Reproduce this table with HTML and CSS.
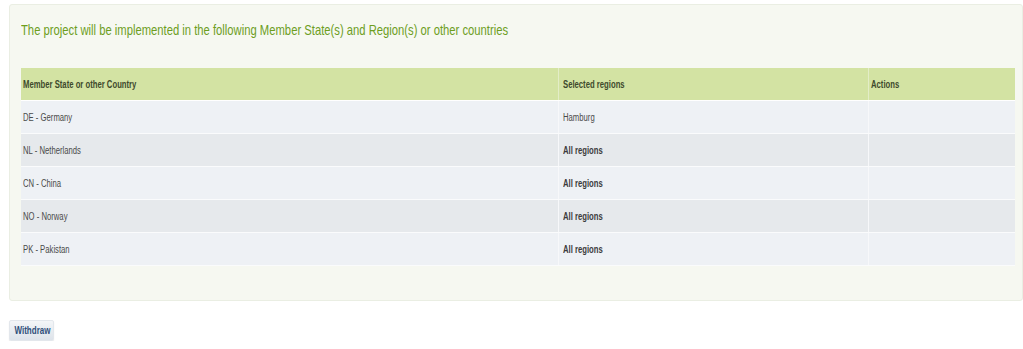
FILE: index.html
```html
<!DOCTYPE html>
<html>
<head>
<meta charset="utf-8">
<link rel="stylesheet" href="styles.css">
</head>
<body>
<div class="panel">
  <h2 class="title"><span class="nx">The project will be implemented in the following Member State(s) and Region(s) or other countries</span></h2>
  <table class="grid">
    <thead>
      <tr><th class="c1"><span class="nx">Member State or other Country</span></th><th class="c2"><span class="nx">Selected regions</span></th><th class="c3"><span class="nx">Actions</span></th></tr>
    </thead>
    <tbody>
      <tr class="odd"><td><span class="nx">DE - Germany</span></td><td><span class="nx">Hamburg</span></td><td></td></tr>
      <tr class="even"><td><span class="nx">NL - Netherlands</span></td><td class="b"><span class="nx">All regions</span></td><td></td></tr>
      <tr class="odd"><td><span class="nx">CN - China</span></td><td class="b"><span class="nx">All regions</span></td><td></td></tr>
      <tr class="even"><td><span class="nx">NO - Norway</span></td><td class="b"><span class="nx">All regions</span></td><td></td></tr>
      <tr class="odd"><td><span class="nx">PK - Pakistan</span></td><td class="b"><span class="nx">All regions</span></td><td></td></tr>
    </tbody>
  </table>
</div>
<div class="actions"><button class="btn"><span class="nxc">Withdraw</span></button></div>
</body>
</html>
```
FILE: styles.css
```css
html, body { margin: 0; padding: 0; background: #fff; }
body {
  font-family: "Liberation Sans", Arial, sans-serif;
  padding: 4px 2px 0 9px;
}
.nx {
  display: inline-block;
  white-space: nowrap;
  transform: scaleX(0.77);
  transform-origin: left center;
}
.nxc {
  display: inline-block;
  white-space: nowrap;
  transform: scaleX(0.8);
  transform-origin: center center;
}
.panel {
  background: #f6f8f1;
  border: 1px solid #eaeee3;
  border-radius: 3px;
  padding: 14px 5px 34px 11px;
  width: 996px;
}
.title {
  margin: 0 0 27px 0;
  font-weight: normal;
  font-size: 15px;
  line-height: 22px;
  color: #6d9e1e;
}
.title .nx { transform: scaleX(0.75); }
.grid {
  border-collapse: collapse;
  width: 994px;
  font-size: 10px;
  color: #4a4a4a;
}
.grid th {
  background: #d3e3a3;
  text-align: left;
  font-weight: bold;
  color: #3e4a2c;
  height: 32px;
  padding: 0 0 0 2px;
  border-right: 1px solid #e3edc7;
  border-bottom: 1px solid #fff;
}
.grid th.c1 { width: 535px; }
.grid th.c2 { width: 305px; padding-left: 4px; }
.grid th.c3 { border-right: none; }
.grid td {
  height: 32px;
  padding: 0 0 0 2px;
  border-right: 1px solid #f7f8fa;
  border-bottom: 1px solid #fafbfc;
}
.grid td:nth-child(2) { padding-left: 4px; }
.grid td:last-child { border-right: none; }
.grid tr.odd td { background: #eef1f5; }
.grid tr.even td { background: #e6e9ec; }
.grid td.b { font-weight: bold; color: #3c3c3c; }
.actions { padding: 19px 0 0 0; }
.btn {
  font-family: inherit;
  font-size: 10px;
  font-weight: bold;
  color: #2f4f7a;
  background: linear-gradient(#f4f6f8, #dde3ea);
  border: 1px solid #e3e7ec;
  border-radius: 2px;
  box-shadow: 0 1px 1px rgba(0,0,0,0.12);
  width: 45px;
  height: 21px;
  padding: 0;
  text-align: center;
}
```
